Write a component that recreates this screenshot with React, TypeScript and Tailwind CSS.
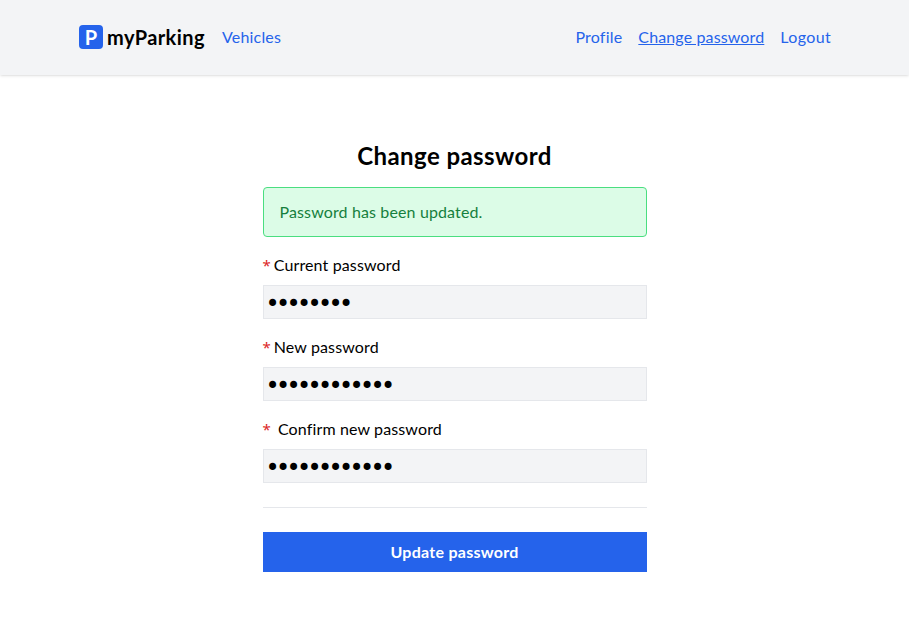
import React from "react";

function Field({ label, value }: { label: string; value: string }) {
  return (
    <div className="flex flex-col gap-2">
      <label className="flex h-6 items-center whitespace-pre text-black"><span className="w-[7px] font-['Noto_Sans',sans-serif] text-[15px] text-[#dc2626]">*</span>{label}</label>
      <input type="password" defaultValue={value} className="h-[34px] w-full border border-[#e5e7eb] bg-[#f3f4f6] pt-[4px] pr-1 pb-0 pl-[2px] font-['DejaVu_Sans',sans-serif] text-2xl leading-none tracking-[-3.66px] text-black outline-none" />
    </div>
  );
}

export default function App() {
  return (
    <div className="min-h-[631px] bg-white font-['Lato','Noto_Sans',sans-serif] text-base tracking-[0.13px] text-black">
      <header className="flex h-[75px] items-center bg-[#f3f4f6] pr-[78px] pb-[2px] pl-[79px] shadow">
        <div className="flex h-6 w-6 items-center justify-center rounded bg-[#2563eb] pt-px text-xl font-bold text-white">P</div>
        <span className="ml-1 text-xl font-bold tracking-[0.42px]">myParking</span>
        <a className="ml-[17px] tracking-[0.2px] text-[#2563eb]">Vehicles</a>
        <nav className="ml-auto flex gap-4 text-[#2563eb]">
          <a className="tracking-[0.2px]">Profile</a>
          <a className="underline">Change password</a>
          <a className="tracking-[0.35px]">Logout</a>
        </nav>
      </header>
      <main className="mx-auto flex w-96 flex-col pt-[65px]">
        <h1 className="mb-[15px] text-center text-2xl font-bold tracking-[0.42px]">Change password</h1>
        <div className="mb-4 flex h-[50px] items-center rounded border border-[#4ade80] bg-[#dcfce7] px-4 text-[#15803d]">Password has been updated.</div>
        <form className="flex flex-col gap-4">
          <Field label=" Current password" value="12345678" />
          <Field label=" New password" value="123456789012" />
          <Field label="  Confirm new password" value="123456789012" />
          <div className="mt-2 h-px bg-[#e5e7eb]" />
          <button className="mt-2 h-10 bg-[#2563eb] font-bold tracking-[0.27px] text-white">Update password</button>
        </form>
      </main>
    </div>
  );
}
